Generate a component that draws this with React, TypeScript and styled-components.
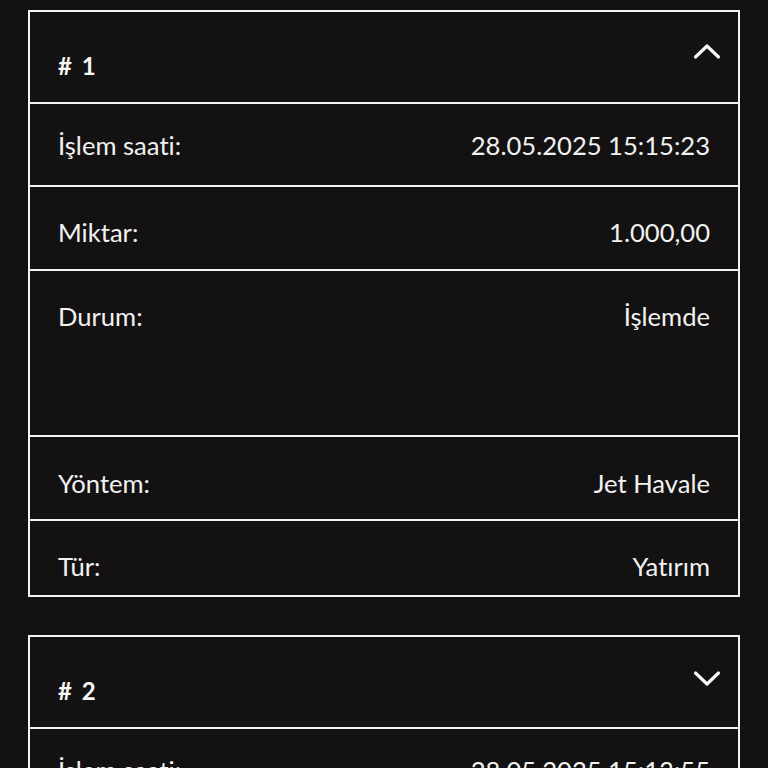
import React from "react";
import styled, { createGlobalStyle } from "styled-components";

const GlobalStyle = createGlobalStyle`
  html, body {
    margin: 0;
    padding: 0;
    background: #141112;
  }
  body {
    font-family: Lato, "Noto Sans", sans-serif;
    color: #f1f1f1;
    font-variant-ligatures: none;
  }
  * { box-sizing: border-box; }
`;

const Page = styled.div`
  padding: 10px 28px;
  display: flex;
  flex-direction: column;
  gap: 38px;
`;

const Card = styled.section`
  border: 2px solid #f4f4f4;
  background: #141112;
  display: flex;
  flex-direction: column;
`;

const Header = styled.div`
  position: relative;
  height: 90px;
  padding: 40px 28px 0;
`;

const Title = styled.h3`
  margin: 0;
  font-family: Lato, sans-serif;
  font-weight: 700;
  font-size: 24px;
  line-height: 1.2;
  letter-spacing: 1px;
  word-spacing: 2px;
  color: #f6f6f6;
`;

const Toggle = styled.button<{ $open: boolean }>`
  position: absolute;
  right: 16px;
  top: ${(p) => (p.$open ? 28 : 31)}px;
  width: 30px;
  height: 22px;
  padding: 0;
  border: none;
  background: transparent;
  display: flex;
  align-items: center;
  justify-content: center;
  cursor: pointer;
`;

const Row = styled.div<{ $h: number; $pt: number }>`
  height: ${(p) => p.$h}px;
  border-top: 2px solid #f4f4f4;
  padding: ${(p) => p.$pt}px 28px 0;
  display: flex;
  justify-content: space-between;
  align-items: flex-start;
  font-size: 25.6px;
  line-height: 1.2;
  font-variant-ligatures: none;
`;

const Label = styled.span`
  color: #f1f1f1;
`;

const Value = styled.span`
  color: #f1f1f1;
  text-align: right;
`;

const Chevron = ({ up }: { up: boolean }) => (
  <svg width="28" height="18" viewBox="0 0 28 18" fill="none">
    <polyline
      points={up ? "2.5,15 14,4 25.5,15" : "2.5,3 14,14 25.5,3"}
      stroke="#f6f6f6"
      strokeWidth="3.2"
      strokeLinecap="round"
      strokeLinejoin="round"
    />
  </svg>
);

type Item = { label: string; value: string; h: number; pt: number };

const tx = (time: string): Item[] => [
  { label: "İşlem saati:", value: time, h: 83, pt: 26 },
  { label: "Miktar:", value: "1.000,00", h: 84, pt: 30 },
  { label: "Durum:", value: "İşlemde", h: 166, pt: 30 },
  { label: "Yöntem:", value: "Jet Havale", h: 84, pt: 31 },
  { label: "Tür:", value: "Yatırım", h: 76, pt: 30 },
];

const cards = [
  { id: 1, open: true, rows: tx("28.05.2025 15:15:23") },
  { id: 2, open: false, rows: tx("28.05.2025 15:13:55") },
];

export default function App() {
  return (
    <>
      <GlobalStyle />
      <Page>
        {cards.map((c) => (
          <Card key={c.id}>
            <Header>
              <Title># {c.id}</Title>
              <Toggle $open={c.open} aria-label="toggle">
                <Chevron up={c.open} />
              </Toggle>
            </Header>
            {c.rows.map((r) => (
              <Row key={r.label} $h={r.h} $pt={r.pt}>
                <Label>{r.label}</Label>
                <Value>{r.value}</Value>
              </Row>
            ))}
          </Card>
        ))}
      </Page>
    </>
  );
}
